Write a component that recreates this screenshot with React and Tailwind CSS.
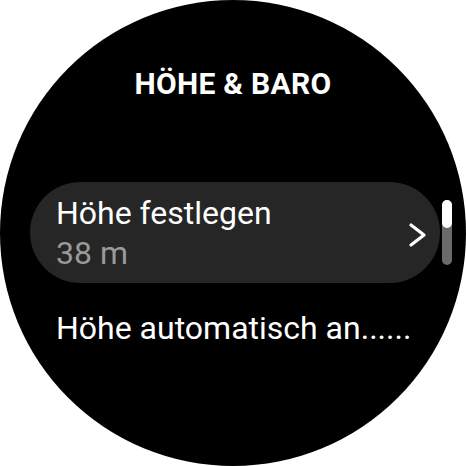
export default function App() {
  return (
    <div className="w-[466px] h-[466px] bg-white" style={{ fontFamily: 'Roboto, "Noto Sans", sans-serif' }}>
      <div className="w-[466px] h-[466px] rounded-full bg-black overflow-hidden flex flex-col">
        <div className="pt-[65px] text-center text-white font-bold text-[30px] leading-[38px] tracking-[0.3px]">
          HÖHE &amp; BARO
        </div>
        <div className="mt-[79px] flex items-center">
          <div className="ml-[30px] w-[410px] h-[101px] rounded-full bg-[#262626] flex items-center pl-[26px] pr-[12px]">
            <div className="flex-1 flex flex-col">
              <span className="text-white text-[32px] leading-[40px]">Höhe festlegen</span>
              <span className="text-[#9a9a9a] text-[32px] leading-[40px]">38 m</span>
            </div>
            <svg width="20" height="26" viewBox="0 0 20 26" className="mt-[4px]">
              <path d="M3 3 L16 13 L3 23" fill="none" stroke="white" strokeWidth="3.2" strokeLinecap="round" strokeLinejoin="round" />
            </svg>
          </div>
          <div className="ml-[2px] w-[10px] h-[65px] rounded-full bg-[#6b6b6b] flex flex-col">
            <div className="w-[10px] h-[28px] rounded-full bg-white" />
          </div>
        </div>
        <div className="mt-[25px] pl-[56px] text-white text-[32px] leading-[40px]">
          Höhe automatisch an......
        </div>
      </div>
    </div>
  );
}
